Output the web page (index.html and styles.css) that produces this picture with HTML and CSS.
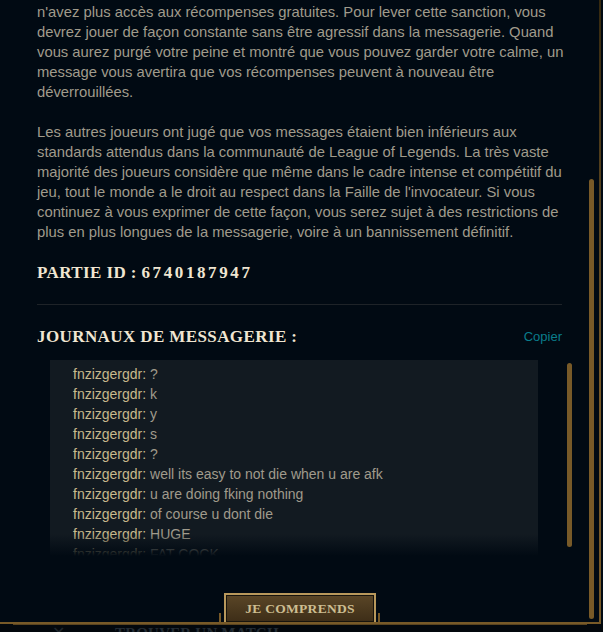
FILE: index.html
```html
<!DOCTYPE html>
<html lang="fr">
<head>
<meta charset="utf-8">
<title>Sanction</title>
<link rel="stylesheet" href="styles.css">
</head>
<body>
<div class="modal">
  <div class="main">
    <p class="text">n'avez plus accès aux récompenses gratuites. Pour lever cette sanction, vous devrez jouer de façon constante sans être agressif dans la messagerie. Quand vous aurez purgé votre peine et montré que vous pouvez garder votre calme, un message vous avertira que vos récompenses peuvent à nouveau être déverrouillées.</p>
    <p class="text">Les autres joueurs ont jugé que vos messages étaient bien inférieurs aux standards attendus dans la communauté de League of Legends. La très vaste majorité des joueurs considère que même dans le cadre intense et compétitif du jeu, tout le monde a le droit au respect dans la Faille de l'invocateur. Si vous continuez à vous exprimer de cette façon, vous serez sujet à des restrictions de plus en plus longues de la messagerie, voire à un bannissement définitif.</p>
    <h2 class="title">PARTIE ID : <span class="num">6740187947</span></h2>
    <div class="divider"></div>
    <div class="log-head">
      <h2 class="title">JOURNAUX DE MESSAGERIE :</h2>
      <span class="copy">Copier</span>
    </div>
    <div class="chat">
      <div class="chat-box">
        <div class="line"><span class="name">fnzizgergdr:</span> ?</div>
        <div class="line"><span class="name">fnzizgergdr:</span> k</div>
        <div class="line"><span class="name">fnzizgergdr:</span> y</div>
        <div class="line"><span class="name">fnzizgergdr:</span> s</div>
        <div class="line"><span class="name">fnzizgergdr:</span> ?</div>
        <div class="line"><span class="name">fnzizgergdr:</span> well its easy to not die when u are afk</div>
        <div class="line"><span class="name">fnzizgergdr:</span> u are doing fking nothing</div>
        <div class="line"><span class="name">fnzizgergdr:</span> of course u dont die</div>
        <div class="line"><span class="name">fnzizgergdr:</span> HUGE</div>
        <div class="line"><span class="name">fnzizgergdr:</span> FAT COCK</div>
      </div>
      <div class="chat-track"><div class="chat-thumb"></div></div>
    </div>
  </div>
  <div class="track"><div class="thumb"></div></div>
  <div class="footer"><button class="btn">JE COMPRENDS</button></div>
</div>
<div class="underlay">
  <div class="under-line"></div>
  <div class="under-row"><span class="under-icon">✕</span><span class="under-text">TROUVER UN MATCH</span></div>
</div>
</body>
</html>
```

FILE: styles.css
```css
html, body {
  margin: 0;
  padding: 0;
}
body {
  background: #010a13;
  width: 603px;
  height: 632px;
  overflow: hidden;
  font-family: "Liberation Sans", Arial, sans-serif;
}
.modal {
  position: relative;
  display: flex;
  width: 599px;
  height: 622px;
  border-style: solid;
  border-width: 0 2px 2px 0;
  border-image: linear-gradient(to bottom, #35290f 0%, #5a4520 35%, #785a28 60%, #785a28 100%) 1;
  background: #010a13;
  overflow: hidden;
}
.main {
  width: 535px;
  padding: 2px 0 0 37px;
  flex: none;
}
.text {
  width: 530px;
  margin: 0 0 20px;
  font-size: 14.8px;
  line-height: 20px;
  color: #a09b8c;
}
.title {
  margin: 0;
  font-family: "Liberation Serif", "Times New Roman", serif;
  font-weight: bold;
  font-size: 17px;
  line-height: 22px;
  letter-spacing: 0.4px;
  color: #f0e6d2;
}
.num {
  letter-spacing: 2.6px;
}
.divider {
  width: 525px;
  height: 1px;
  margin-top: 20px;
  background: #1e2328;
}
.log-head {
  width: 525px;
  margin-top: 21px;
  display: flex;
  justify-content: space-between;
  align-items: flex-start;
}
.copy {
  margin-top: 3px;
  font-size: 13px;
  line-height: 16px;
  color: #0a7d8c;
}
.chat {
  display: flex;
  margin: 12px 0 0 13px;
}
.chat-box {
  position: relative;
  width: 465px;
  height: 192px;
  padding: 4px 0 0 23px;
  background: #121a21;
  overflow: hidden;
  font-size: 14px;
  line-height: 20px;
  color: #a09b8c;
}
.chat-box::after {
  content: "";
  position: absolute;
  left: 0;
  right: 0;
  bottom: 0;
  height: 22px;
  background: linear-gradient(to bottom, rgba(1, 10, 19, 0), #010a13);
}
.name {
  color: #c8b98c;
}
.chat-track {
  width: 5px;
  margin-left: 29px;
  padding-top: 3px;
}
.chat-thumb {
  height: 184px;
  border-radius: 3px;
  background: #785a28;
}
.track {
  width: 5px;
  margin-left: 17px;
  padding-top: 179px;
  flex: none;
}
.thumb {
  height: 440px;
  border-radius: 3px;
  background: #785a28;
}
.footer {
  position: absolute;
  left: 219px;
  top: 613px;
  width: 157px;
  height: 9px;
  border-left: 2px solid #785a28;
  border-right: 2px solid #785a28;
}
.btn {
  position: absolute;
  left: 3px;
  top: -20px;
  width: 152px;
  height: 31px;
  margin: 0;
  padding: 0;
  border: 2px solid #b8985c;
  box-shadow: inset 0 0 0 1px #17140e;
  background: linear-gradient(to bottom, #5a4627, #3d2d17);
  font-family: "Liberation Serif", "Times New Roman", serif;
  font-weight: bold;
  font-size: 13.5px;
  letter-spacing: 0.3px;
  color: #cdbe91;
  cursor: pointer;
}
.underlay {
  height: 8px;
  overflow: hidden;
  background: #03080d;
}
.under-line {
  width: 574px;
  height: 1px;
  margin-left: 13px;
  background: #5a4420;
}
.under-row {
  display: flex;
  align-items: flex-start;
  gap: 50px;
  padding-left: 52px;
  margin-top: 0;
}
.under-icon {
  font-size: 16px;
  line-height: 16px;
  color: #1f262c;
}
.under-text {
  font-family: "Liberation Serif", serif;
  font-weight: bold;
  font-size: 15px;
  line-height: 16px;
  letter-spacing: 0.2px;
  color: #232c34;
}
```
